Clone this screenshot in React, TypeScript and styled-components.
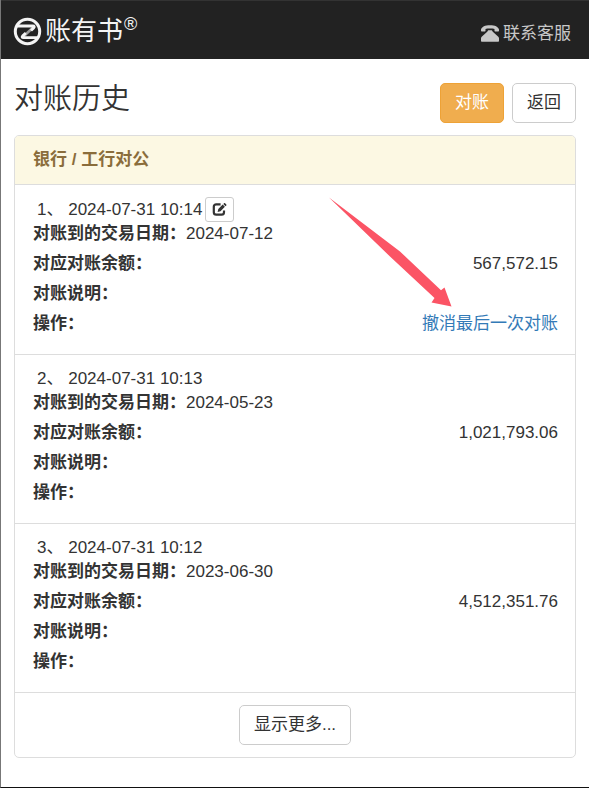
import React from 'react';
import styled, { createGlobalStyle, css } from 'styled-components';

const GlobalStyle = createGlobalStyle`
  * { box-sizing: border-box; }
  html { background: #fff; }
  body {
    margin: 0;
    color: #333;
    font-family: "Liberation Sans", "Noto Sans CJK SC", sans-serif;
    font-size: 17px;
    line-height: 24px;
  }
`;

const Page = styled.div`
  min-height: 100vh;
  border-left: 1px solid #777;
  border-bottom: 1px solid #111;
`;

const Navbar = styled.header`
  display: flex;
  align-items: center;
  justify-content: space-between;
  height: 59px;
  padding: 2px 18px 0 12px;
  background: #222;
  border-top: 1px solid #333;
`;

const Brand = styled.a`
  display: flex;
  align-items: center;
  gap: 3px;
  color: #f4f4f4;
  text-decoration: none;
`;

const BrandName = styled.span`
  font-family: "Noto Sans CJK SC", sans-serif;
  font-size: 26px;
  line-height: 28px;
  padding-bottom: 4px;
`;

const Registered = styled.sup`
  align-self: flex-start;
  margin-left: -2px;
  font-size: 18px;
  line-height: 18px;
`;

const Contact = styled.a`
  display: flex;
  align-items: center;
  gap: 4px;
  padding-top: 6px;
  color: #c8c8c8;
  text-decoration: none;

  svg {
    margin-bottom: 2px;
  }
`;

const Content = styled.main`
  padding: 24px 13px 20px;
`;

const TitleRow = styled.div`
  display: flex;
  align-items: flex-start;
  justify-content: space-between;
  margin-bottom: 12px;
`;

const Title = styled.h1`
  margin: 0;
  font-size: 29px;
  font-weight: 350;
  line-height: 32px;
`;

const Actions = styled.div`
  display: flex;
  gap: 8px;
`;

const Button = styled.button<{ $tone?: 'warning' }>`
  height: 40px;
  padding: 0 14px;
  border: 1px solid #ccc;
  border-radius: 5px;
  background: #fff;
  color: #333;
  font: inherit;
  cursor: pointer;
  ${(p) =>
    p.$tone === 'warning' &&
    css`
      border-color: #eea236;
      background: #f0ad4e;
      color: #fff;
    `}
`;

const Panel = styled.section`
  border: 1px solid #ddd;
  border-radius: 5px;
  overflow: hidden;
`;

const PanelHeading = styled.h2`
  margin: 0;
  padding: 12px 18px;
  border-bottom: 1px solid #ddd;
  background: #fcf8e3;
  color: #8a6d3b;
  font-size: 17px;
  font-weight: 700;
  line-height: 24px;
`;

const RecordList = styled.ol`
  margin: 0;
  padding: 0;
  list-style: none;
`;

const Record = styled.li`
  position: relative;
  padding: 12px 17px 12px 18px;
  border-bottom: 1px solid #ddd;
`;

const RecordTime = styled.div`
  display: flex;
  align-items: center;
  gap: 3px;
  padding-left: 4px;
`;

const EditButton = styled.button`
  display: grid;
  place-items: center;
  width: 29px;
  height: 25px;
  padding: 0;
  border: 1px solid #ccc;
  border-radius: 3px;
  background: #fff;
  color: #333;
  cursor: pointer;
`;

const Fields = styled.dl`
  margin: 0;
`;

const Field = styled.div<{ $spread?: boolean }>`
  display: flex;
  justify-content: ${(p) => (p.$spread ? 'space-between' : 'flex-start')};
  height: 24px;
  margin-bottom: 6px;
`;

const Label = styled.dt`
  font-weight: 700;
`;

const Value = styled.dd`
  margin: 0;
`;

const UndoLink = styled.a`
  color: #337ab7;
  text-decoration: none;
`;

const Pointer = styled.svg`
  position: absolute;
  top: 12px;
  right: 122px;
  pointer-events: none;
`;

const PanelFooter = styled.div`
  display: flex;
  justify-content: center;
  padding: 12px;
`;

const LogoMark = () => (
  <svg width="29" height="29" viewBox="0 0 29 29" fill="none" aria-hidden="true">
    <circle cx="14.5" cy="14.5" r="12.2" stroke="#f4f4f4" strokeWidth="3" />
    <path d="m10.500 19.500 9.500-9" stroke="#999" strokeWidth="2.600" />
    <path d="M4 9h15.800c1.600 0 1.900.8.8 1.900L18 13.400" stroke="#f4f4f4" strokeWidth="2.800" />
    <path d="m12.800 16-3 2.800c-1.100 1.100-.8 1.900.7 1.900H25" stroke="#f4f4f4" strokeWidth="2.800" />
  </svg>
);

const PhoneIcon = () => (
  <svg width="18" height="17" viewBox="0 0 18 17" fill="currentColor" aria-hidden="true">
    <path d="M0 4.600C.8 1.700 4 .3 9 .3s8.200 1.400 9 4.300v1.200c0 .4-.3.600-.7.600h-3.100c-.5 0-.7-.3-.7-.7V3.900C11.500 3.300 6.500 3.300 4.500 3.900v1.800c0 .4-.2.700-.7.700H.7C.3 6.400 0 6.200 0 5.800Z" />
    <path d="M7.200 5.200h3.600l1 1.600 5.500 5c.4.400.7.800.7 1.400V16c0 .5-.3.800-.8.800H.8c-.5 0-.8-.3-.8-.8v-2.800c0-.6.300-1 .7-1.400l5.500-5Z" />
  </svg>
);

const EditIcon = () => (
  <svg width="15" height="15" viewBox="0 0 15 15" fill="none" aria-hidden="true">
    <path d="M8.600 2.400H4.200c-1.500 0-2.400.9-2.400 2.400v5.400c0 1.500.9 2.400 2.400 2.400h5.400c1.500 0 2.400-.9 2.400-2.400V8.400" stroke="currentColor" strokeWidth="2.200" />
    <path d="m5.600 10 .7-3L10.700 2.600l2.200 2.200L8.500 9.200Zm5.700-8 .8-.8c.3-.3.700-.3 1 0l1.200 1.200c.3.300.3.700 0 1l-.8.800Z" fill="currentColor" />
  </svg>
);

type Entry = { time: string; date: string; balance: string; latest?: boolean };

const entries: Entry[] = [
  { time: '2024-07-31 10:14', date: '2024-07-12', balance: '567,572.15', latest: true },
  { time: '2024-07-31 10:13', date: '2024-05-23', balance: '1,021,793.06' },
  { time: '2024-07-31 10:12', date: '2023-06-30', balance: '4,512,351.76' },
];

export default function App() {
  return (
    <>
      <GlobalStyle />
      <Page>
        <Navbar>
          <Brand href="#">
            <LogoMark />
            <BrandName>账有书</BrandName>
            <Registered>®</Registered>
          </Brand>
          <Contact href="#contact">
            <PhoneIcon />
            联系客服
          </Contact>
        </Navbar>
        <Content>
          <TitleRow>
            <Title>对账历史</Title>
            <Actions>
              <Button type="button" $tone="warning">对账</Button>
              <Button type="button">返回</Button>
            </Actions>
          </TitleRow>
          <Panel>
            <PanelHeading>银行 / 工行对公</PanelHeading>
            <RecordList>
              {entries.map((entry, i) => (
                <Record key={entry.time}>
                  <RecordTime>
                    <span>{i + 1}、 {entry.time}</span>
                    {entry.latest && (
                      <EditButton type="button" aria-label="编辑">
                        <EditIcon />
                      </EditButton>
                    )}
                  </RecordTime>
                  <Fields>
                    <Field>
                      <Label>对账到的交易日期：</Label>
                      <Value>{entry.date}</Value>
                    </Field>
                    <Field $spread>
                      <Label>对应对账余额：</Label>
                      <Value>{entry.balance}</Value>
                    </Field>
                    <Field>
                      <Label>对账说明：</Label>
                    </Field>
                    <Field $spread>
                      <Label>操作：</Label>
                      {entry.latest && (
                        <Value>
                          <UndoLink href="#undo">撤消最后一次对账</UndoLink>
                        </Value>
                      )}
                    </Field>
                  </Fields>
                  {entry.latest && (
                    <Pointer width="124" height="111" viewBox="0 0 124 111" aria-hidden="true">
                      <path d="M0 0.500 71 54.500 112 93.300 115.500 90.500 122.500 109.500 102.500 105.500 105.500 101 61 59.500Z" fill="#fb5465" />
                    </Pointer>
                  )}
                </Record>
              ))}
            </RecordList>
            <PanelFooter>
              <Button type="button">显示更多...</Button>
            </PanelFooter>
          </Panel>
        </Content>
      </Page>
    </>
  );
}
